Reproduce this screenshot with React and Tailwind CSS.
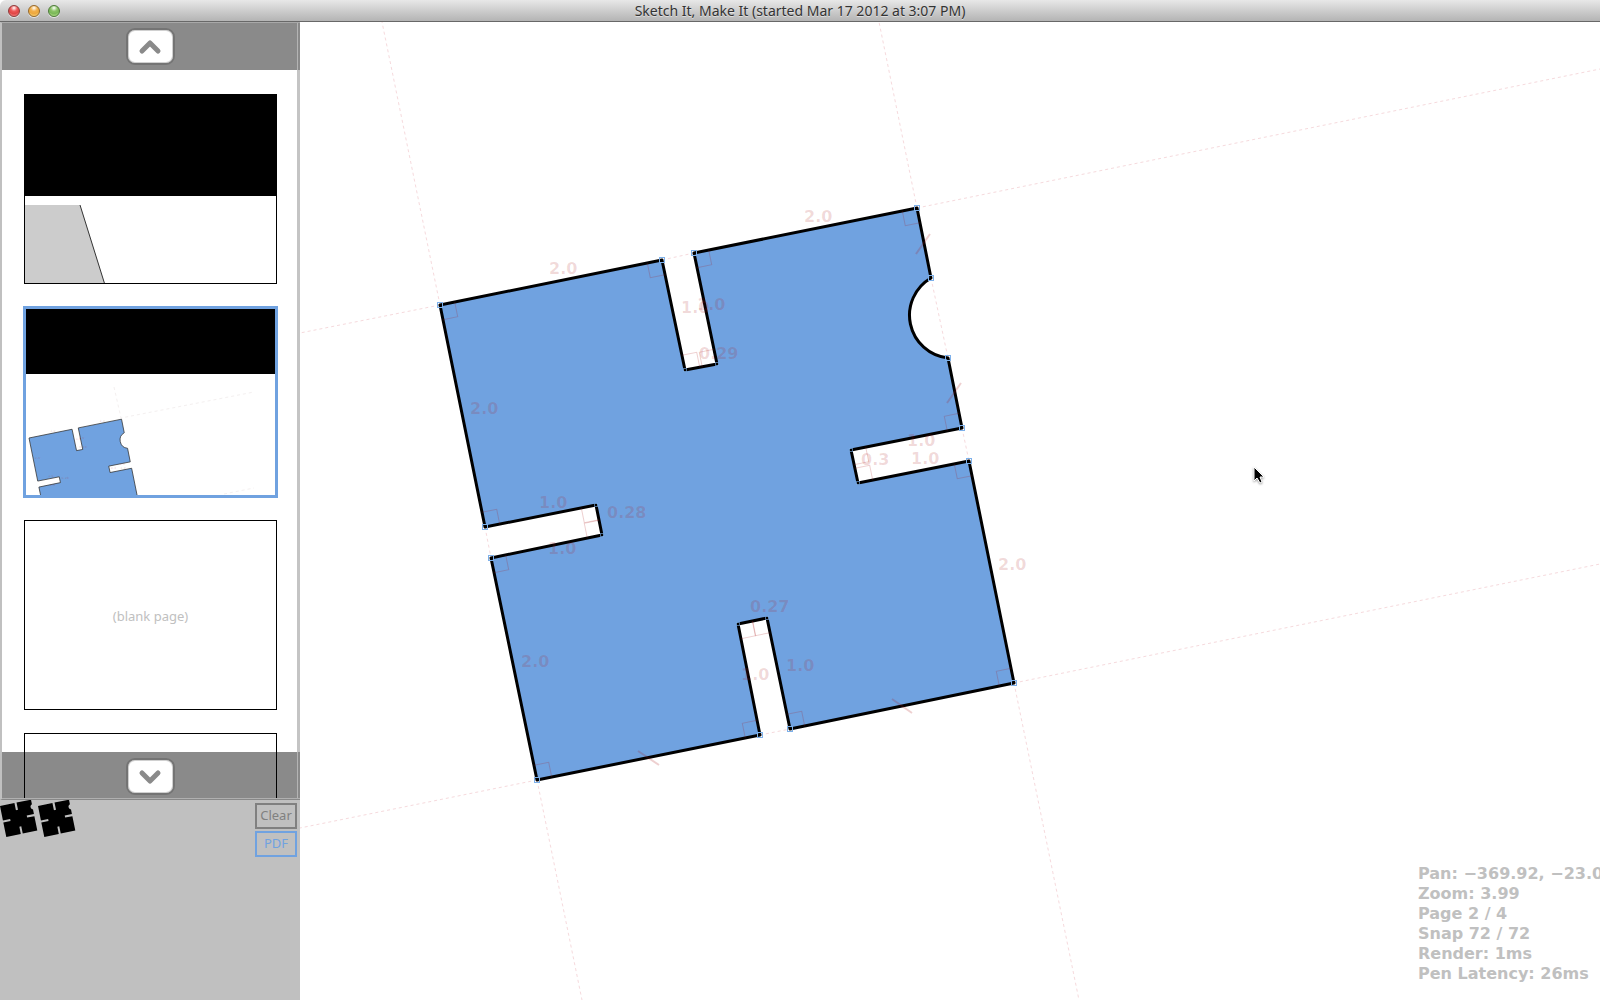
import React from "react";

const OUTLINE =
  "M440 305 L662 260 L685 370 L717 364 L694 253 L917 208 L931 278 A43 43 0 0 0 948 358 L962 428 L851 450 L858 483 L969 461 L1014 683 L790 729 L767 618 L738 624 L760 735 L537 780 L491 558 L602 535 L596 505 L485 527 Z";

const GUIDES = [
  [440, 305, 300, 333],
  [440, 305, 382, 22],
  [662, 260, 694, 253],
  [917, 208, 879, 22],
  [917, 208, 1600, 69],
  [931, 278, 948, 358],
  [962, 428, 969, 461],
  [1014, 683, 1600, 564],
  [1014, 683, 1079, 1000],
  [760, 735, 790, 729],
  [537, 780, 300, 828],
  [537, 780, 582, 1000],
  [485, 527, 491, 558],
];

// x, y, then the direction of the marker along each axis of the part.
// The first twelve are outer corners, the rest lie at the ends of the slots.
const CORNERS = [
  [440, 305, 1, 1],
  [662, 260, -1, 1],
  [694, 253, 1, 1],
  [917, 208, -1, 1],
  [962, 428, -1, -1],
  [969, 461, -1, 1],
  [1014, 683, -1, -1],
  [790, 729, 1, -1],
  [760, 735, -1, -1],
  [537, 780, 1, -1],
  [491, 558, 1, 1],
  [485, 527, 1, -1],
  [685, 370, 1, -1],
  [717, 364, -1, -1],
  [851, 450, 1, 1],
  [858, 483, 1, -1],
  [596, 505, -1, 1],
  [602, 535, -1, -1],
  [767, 618, -1, 1],
  [738, 624, 1, 1],
];

const ARC_ENDS = [
  [931, 278],
  [948, 358],
];

const TICKS = [
  [916, 254, 930, 234],
  [947, 403, 961, 383],
  [638, 751, 659, 765],
  [892, 699, 912, 713],
];

const LABELS = [
  ["2.0", 549, 274],
  ["2.0", 804, 222],
  ["1.0", 681, 313],
  ["1.0", 697, 310],
  ["0.29", 699, 359],
  ["2.0", 470, 414],
  ["1.0", 539, 508],
  ["1.0", 548, 554],
  ["0.28", 607, 518],
  ["0.3", 861, 465],
  ["1.0", 907, 446],
  ["1.0", 911, 464],
  ["2.0", 998, 570],
  ["0.27", 750, 612],
  ["1.0", 786, 671],
  ["1.0", 741, 680],
  ["2.0", 521, 667],
];

const STATUS = [
  "Pan: −369.92, −23.0",
  "Zoom: 3.99",
  "Page 2 / 4",
  "Snap 72 / 72",
  "Render: 1ms",
  "Pen Latency: 26ms",
];

function TrafficLight({ label, className }) {
  return (
    <button
      aria-label={label}
      className={
        "size-3 rounded-full border shadow-[0_1px_0_rgba(255,255,255,0.6)] " + className
      }
    />
  );
}

function TitleBar() {
  return (
    <header className="grid h-[22px] shrink-0 grid-cols-[1fr_auto_1fr] items-center rounded-tl-md border-b border-[#686868] bg-linear-to-b from-[#e8e8e8] to-[#b4b4b4] px-2">
      <div className="flex gap-2">
        <TrafficLight
          label="Close"
          className="border-[#8f3a3a] bg-[radial-gradient(circle_at_50%_20%,#ffffff_0%,#ee5a5a_35%,#e04646_60%,#ff9c9c_100%)]"
        />
        <TrafficLight
          label="Minimize"
          className="border-[#96682a] bg-[radial-gradient(circle_at_50%_20%,#ffffff_0%,#f2b04c_35%,#eda83e_60%,#ffe890_100%)]"
        />
        <TrafficLight
          label="Zoom"
          className="border-[#4c7a38] bg-[radial-gradient(circle_at_50%_20%,#ffffff_0%,#8cc468_35%,#7ab858_60%,#ccf4a0_100%)]"
        />
      </div>
      <h1 className="text-[14px] leading-5 whitespace-nowrap text-[#333333] [text-shadow:0_1px_0_rgba(255,255,255,0.5)]">
        Sketch It, Make It (started Mar 17 2012 at 3:07 PM)
      </h1>
    </header>
  );
}

function ArrowButton({ label, d }) {
  return (
    <button
      aria-label={label}
      className="flex h-[37px] w-[49px] items-center justify-center rounded-[9px] border-2 border-[#747474] bg-white shadow-[inset_0_0_0_1px_#d0d0d0]"
    >
      <svg width="24" height="16" viewBox="0 0 24 16" fill="none" stroke="#8a8a8a" strokeWidth="5" strokeLinecap="round" strokeLinejoin="round">
        <path d={d} />
      </svg>
    </button>
  );
}

function Page({ label, selected, children }) {
  return (
    <button
      aria-label={label}
      className={
        "h-[190px] w-full shrink-0 overflow-hidden bg-white text-[13px] text-[#c0c0c0] " +
        (selected ? "outline-3 -outline-offset-2 outline-[#70a2e0]" : "border border-black")
      }
    >
      {children}
    </button>
  );
}

function PageList() {
  return (
    <nav aria-label="Pages" className="relative flex min-h-0 flex-1 flex-col overflow-hidden border-t border-b border-l-2 border-t-[#a8a8a8] border-b-[#888888] border-l-[#c0c0c0] bg-white">
      <div className="flex h-[47px] shrink-0 items-center justify-center bg-[#8a8a8a] pr-0.5 shadow-[inset_-2px_0_0_#8a8a8a,inset_-3px_0_0_#b4b4b4]">
        <ArrowButton label="Previous pages" d="M4 12 L12 4 L20 12" />
      </div>
      <div className="flex flex-col gap-[23px] border-r-3 border-[#c4c4c4] pt-6 pr-5 pl-[22px]">
        <Page label="Page 1">
          <svg className="size-full">
            <rect width="100%" height="101" />
            <path d="M0 110 H55 L80 190 H0 Z" fill="#cccccc" />
            <path d="M55 110 L80 190" stroke="#333" strokeWidth="1" />
          </svg>
        </Page>
        <Page label="Page 2" selected>
          <svg className="size-full">
            <rect width="100%" height="67" />
            <path d="M90 80 L97 111 L230 85 M200 187 L230 181" stroke="#f4f0f0" strokeDasharray="3 3" fill="none" />
            <g transform="translate(5 131) scale(0.194) translate(-440 -305)">
              <path d={OUTLINE} fill="#70a2e0" stroke="#333" strokeWidth="4" />
              <g className="text-[16px] font-['DejaVu_Sans',sans-serif] font-bold" fill="rgba(170,20,20,0.16)">
                {LABELS.filter(([, , y]) => y < 560).map(([t, x, y]) => (
                  <text key={t + x} x={x} y={y}>{t}</text>
                ))}
              </g>
            </g>
          </svg>
        </Page>
        <Page label="Page 3">
          <span className="block pt-1">(blank page)</span>
        </Page>
        <Page label="Page 4" />
      </div>
      <div className="absolute inset-x-0 bottom-0 flex h-[47px] items-center justify-center bg-black/46 pt-0.5 pr-0.5 shadow-[inset_0_-1px_0_#b0b0b0,inset_-2px_0_0_#8a8a8a,inset_-3px_0_0_#b4b4b4]">
        <ArrowButton label="Next pages" d="M4 4 L12 12 L20 4" />
      </div>
    </nav>
  );
}

function Tray() {
  return (
    <section aria-label="Parts" className="flex h-[200px] shrink-0 items-start justify-between bg-[#c0c0c0] pr-[3px]">
      <svg width="76" height="38">
        <path d={OUTLINE} transform="translate(0 6) scale(0.065) translate(-440 -305)" />
        <path d={OUTLINE} transform="translate(38 6) scale(0.065) translate(-440 -305)" />
      </svg>
      <div className="flex w-[42px] flex-col gap-0.5 pt-[3px] text-[13px]">
        <button className="h-[26px] border-2 border-[#808080] text-[#808080]">Clear</button>
        <button className="h-[26px] border-2 border-[#70a2e0] text-[#70a2e0]">PDF</button>
      </div>
    </section>
  );
}

function Canvas() {
  return (
    <main className="relative min-w-0 flex-1 overflow-hidden bg-white font-['DejaVu_Sans',sans-serif]">
      <svg className="block size-full">
        <g transform="translate(-300 -22)" fill="none">
          <g stroke="#f6dadd" strokeDasharray="3 3">
            {GUIDES.map(([a, b, c, d]) => (
              <line key={a + "-" + b + "-" + c} x1={a} y1={b} x2={c} y2={d} />
            ))}
          </g>
          <path d={OUTLINE} fill="#70a2e0" stroke="#000" strokeWidth="3" strokeLinejoin="round" />
          <g stroke="rgba(170,20,20,0.2)">
            {CORNERS.map(([x, y, sx, sy]) => (
              <path
                key={x + "-" + y}
                transform={`translate(${x} ${y}) rotate(-11.5) scale(${sx} ${sy})`}
                d="M15 0 V15 H0"
              />
            ))}
            {TICKS.map(([a, b, c, d]) => (
              <line key={a} x1={a} y1={b} x2={c} y2={d} strokeWidth="2" />
            ))}
          </g>
          <g stroke="#7db0ea" shapeRendering="crispEdges">
            {CORNERS.slice(0, 12).concat(ARC_ENDS).map(([x, y]) => (
              <rect key={x + "-" + y} x={x - 3} y={y - 3} width="5" height="5" />
            ))}
            {CORNERS.slice(12).map(([x, y]) => (
              <rect key={x + "-" + y} x={x - 2} y={y - 2} width="3" height="3" strokeOpacity="0.6" />
            ))}
          </g>
          <g fill="rgba(170,20,20,0.16)" className="text-[16px] font-bold">
            {LABELS.map(([t, x, y]) => (
              <text key={t + x} x={x} y={y}>{t}</text>
            ))}
          </g>
          <path
            d="M1254 467 V481 L1257 478 L1260 483 L1262 482 L1260 477 H1264 Z"
            fill="#000"
            stroke="#fff"
            strokeWidth="1"
            className="drop-shadow-[0_1px_1px_rgba(0,0,0,0.4)]"
          />
        </g>
      </svg>
      <div className="absolute right-0 bottom-4 w-[182px] text-[16px] leading-5 font-bold whitespace-nowrap text-[#c0c0c0]">
        {STATUS.map((line) => (
          <p key={line}>{line}</p>
        ))}
      </div>
    </main>
  );
}

export default function App() {
  return (
    <div className="flex h-screen flex-col overflow-hidden bg-white font-['Noto_Sans',sans-serif]">
      <TitleBar />
      <div className="flex min-h-0 flex-1">
        <aside className="flex w-[300px] shrink-0 flex-col bg-[#c0c0c0]">
          <PageList />
          <Tray />
        </aside>
        <Canvas />
      </div>
    </div>
  );
}
